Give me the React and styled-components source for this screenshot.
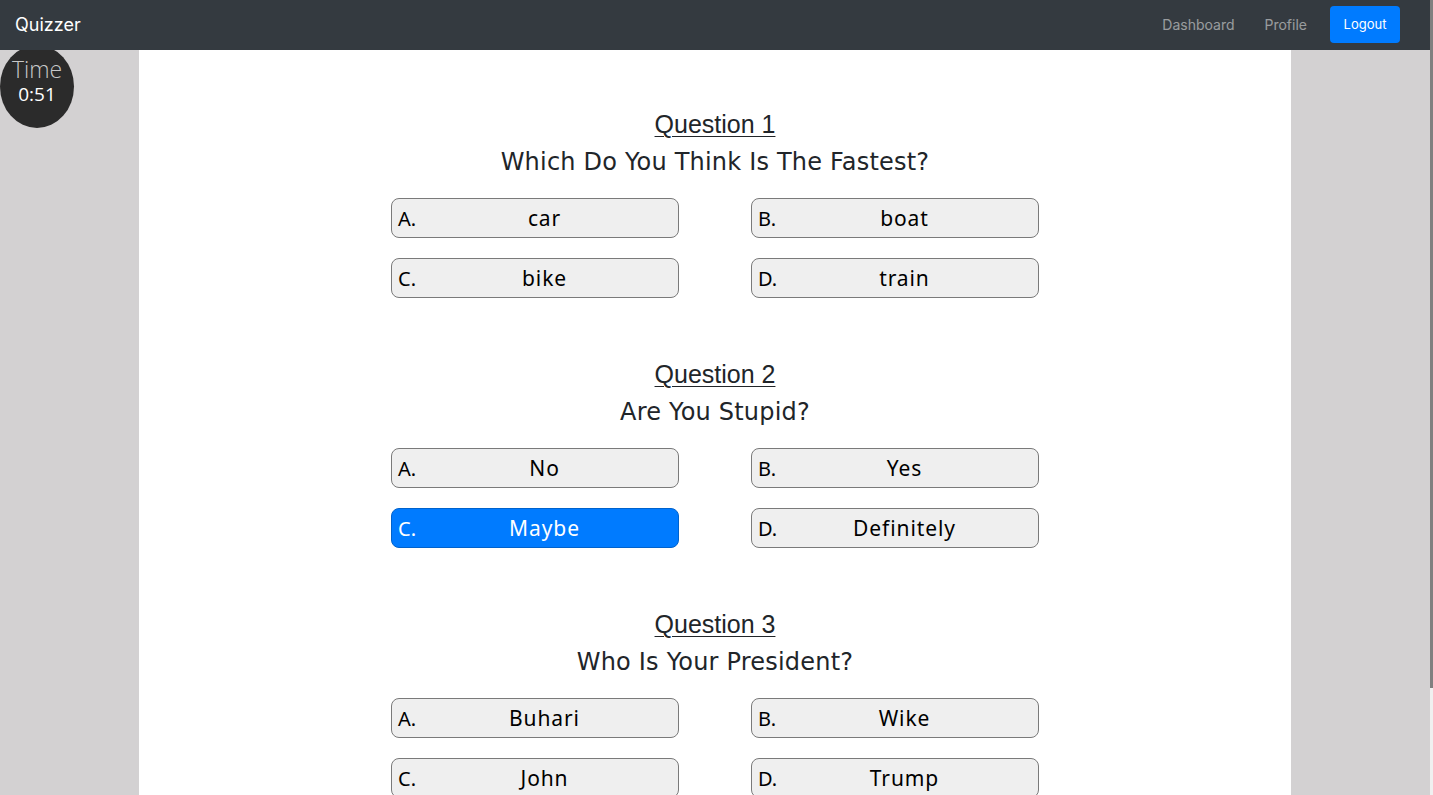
import React, { useState } from 'react';
import styled, { createGlobalStyle } from 'styled-components';

const GlobalStyle = createGlobalStyle`
  html, body {
    margin: 0;
    padding: 0;
    background: #d3d1d2;
  }
  body {
    font-family: "Open Sans", "Noto Sans", sans-serif;
    color: #212529;
  }
`;

const Page = styled.div`
  padding-right: 3px;
`;

// thin overlay scrollbar at the window edge
const ScrollTrack = styled.div`
  position: fixed;
  z-index: 5;
  top: 0;
  right: 0;
  width: 3px;
  height: 100vh;
  background: #f0f0f0;
`;

const ScrollThumb = styled.div`
  width: 3px;
  height: 688px;
  background: #808080;
`;

const Navbar = styled.nav`
  position: relative;
  z-index: 2;
  height: 50px;
  background: #343a40;
  display: flex;
  align-items: center;
  padding: 0 30px 0 15px;
`;

const Brand = styled.div`
  font-family: Inter, "Noto Sans", sans-serif;
  font-size: 18px;
  color: #fff;
  flex: 1;
  margin-top: -2px;
`;

const NavLinks = styled.div`
  display: flex;
  align-items: center;
  gap: 30px;
`;

const NavLink = styled.a`
  font-family: Inter, "Noto Sans", sans-serif;
  font-size: 14px;
  color: rgba(255, 255, 255, 0.5);
  text-decoration: none;
  cursor: pointer;
  margin-top: -2px;
`;

const LogoutButton = styled.button`
  font-family: Inter, "Noto Sans", sans-serif;
  font-size: 13px;
  color: #fff;
  background: #007bff;
  border: none;
  border-radius: 4px;
  width: 70px;
  height: 37px;
  margin-left: -7px;
  margin-top: -2px;
`;

const Timer = styled.div`
  position: absolute;
  z-index: 1;
  top: 45px;
  left: 0;
  width: 74px;
  height: 83px;
  border-radius: 50%;
  background: #2b2b2b;
  display: flex;
  flex-direction: column;
  align-items: center;
  font-family: "Open Sans", sans-serif;
  padding-top: 12px;
  box-sizing: border-box;
`;

const TimerLabel = styled.div`
  font-size: 23px;
  line-height: 25px;
  color: #c8c8c8;
  font-weight: 300;
`;

const TimerValue = styled.div`
  font-size: 19px;
  line-height: 24px;
  color: #fff;
`;

const Main = styled.main`
  width: 1152px;
  margin: 0 auto;
  background: #fff;
  padding: 60px 0 120px;
`;

const QuestionBlock = styled.section`
  display: flex;
  flex-direction: column;
  align-items: center;
  margin-bottom: 62px;

  &:last-child {
    margin-bottom: 0;
  }
`;

const QuestionTitle = styled.h3`
  margin: 0 0 6px;
  font-family: "Liberation Sans", Arial, sans-serif;
  font-weight: 400;
  font-size: 25px;
  line-height: 28px;
  text-decoration: underline;
  text-underline-offset: 3px;
  text-decoration-thickness: 1px;
  color: #212529;
`;

const QuestionText = styled.p`
  margin: 0 0 18px;
  font-family: "DejaVu Sans", "Open Sans", sans-serif;
  font-size: 24px;
  letter-spacing: 0.2px;
  line-height: 36px;
  color: #212529;
`;

const OptionsGrid = styled.div`
  display: grid;
  grid-template-columns: 288px 288px;
  column-gap: 72px;
  row-gap: 20px;
`;

const Option = styled.button`
  position: relative;
  height: 40px;
  box-sizing: border-box;
  border: 1px solid ${(p) => (p.selected ? '#0062cc' : '#7a7a7a')};
  border-radius: 8px;
  background: ${(p) => (p.selected ? '#007bff' : '#efefef')};
  color: ${(p) => (p.selected ? '#fff' : '#000')};
  font-family: "Noto Sans", sans-serif;
  font-size: 21px;
  letter-spacing: 0.9px;
  display: flex;
  align-items: center;
  justify-content: center;
  padding: 0 0 0 19px;
  cursor: pointer;
`;

const OptionLetter = styled.span`
  position: absolute;
  left: 6px;
  top: 50%;
  transform: translateY(-50%);
  letter-spacing: 0;
  font-size: 20px;
`;

const questions = [
  {
    title: 'Question 1',
    text: 'Which Do You Think Is The Fastest?',
    options: ['car', 'boat', 'bike', 'train'],
  },
  {
    title: 'Question 2',
    text: 'Are You Stupid?',
    options: ['No', 'Yes', 'Maybe', 'Definitely'],
  },
  {
    title: 'Question 3',
    text: 'Who Is Your President?',
    options: ['Buhari', 'Wike', 'John', 'Trump'],
  },
];

const letters = ['A.', 'B.', 'C.', 'D.'];

export default function App() {
  const [answers, setAnswers] = useState({ 1: 2 });

  return (
    <Page>
      <GlobalStyle />
      <Navbar>
        <Brand>Quizzer</Brand>
        <NavLinks>
          <NavLink>Dashboard</NavLink>
          <NavLink>Profile</NavLink>
          <LogoutButton>Logout</LogoutButton>
        </NavLinks>
      </Navbar>
      <Timer>
        <TimerLabel>Time</TimerLabel>
        <TimerValue>0:51</TimerValue>
      </Timer>
      <Main>
        {questions.map((q, qi) => (
          <QuestionBlock key={qi}>
            <QuestionTitle>{q.title}</QuestionTitle>
            <QuestionText>{q.text}</QuestionText>
            <OptionsGrid>
              {q.options.map((opt, oi) => (
                <Option
                  key={oi}
                  selected={answers[qi] === oi}
                  onClick={() => setAnswers({ ...answers, [qi]: oi })}
                >
                  <OptionLetter>{letters[oi]}</OptionLetter>
                  {opt}
                </Option>
              ))}
            </OptionsGrid>
          </QuestionBlock>
        ))}
      </Main>
      <ScrollTrack>
        <ScrollThumb />
      </ScrollTrack>
    </Page>
  );
}
